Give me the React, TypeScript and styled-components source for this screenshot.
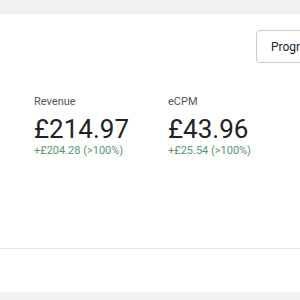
import React from 'react';
import styled, { createGlobalStyle } from 'styled-components';

const GlobalStyle = createGlobalStyle`
  html, body {
    margin: 0;
    padding: 0;
    overflow: hidden;
    background: #f0f1f3;
    font-family: Roboto, "Liberation Sans", sans-serif;
  }
`;

const Page = styled.div`
  width: 400px;
  padding-top: 14px;
`;

const Card = styled.section`
  background: #ffffff;
  height: 278px;
  display: flex;
  flex-direction: column;
`;

const Toolbar = styled.div`
  display: flex;
  justify-content: flex-end;
  padding: 16px 34px 0 0;
`;

const Button = styled.button`
  width: 110px;
  height: 33px;
  padding: 0 14px;
  text-align: left;
  background: #fff;
  border: 1px solid #c9cbcf;
  border-radius: 4px;
  font-family: Roboto, "Liberation Sans", sans-serif;
  font-size: 12px;
  color: #222;
`;

const Stats = styled.div`
  display: flex;
  padding: 32px 0 0 34px;
  height: 186px;
  box-sizing: border-box;
  border-bottom: 1px solid #e6e7eb;
`;

const Stat = styled.div`
  width: 134px;
  display: flex;
  flex-direction: column;
`;

const Label = styled.div`
  font-size: 11px;
  color: #555;
  line-height: 13px;
`;

const Value = styled.div`
  font-size: 26px;
  color: #222;
  line-height: 30px;
  margin-top: 6px;
`;

const Change = styled.div`
  font-size: 11px;
  color: #5a9470;
  line-height: 13px;
`;

const stats = [
  { label: 'Revenue', value: '£214.97', change: '+£204.28 (>100%)' },
  { label: 'eCPM', value: '£43.96', change: '+£25.54 (>100%)' },
];

export default function App() {
  return (
    <Page>
      <GlobalStyle />
      <Card>
        <Toolbar>
          <Button>Programmatic</Button>
        </Toolbar>
        <Stats>
          {stats.map((s) => (
            <Stat key={s.label}>
              <Label>{s.label}</Label>
              <Value>{s.value}</Value>
              <Change>{s.change}</Change>
            </Stat>
          ))}
        </Stats>
      </Card>
    </Page>
  );
}
